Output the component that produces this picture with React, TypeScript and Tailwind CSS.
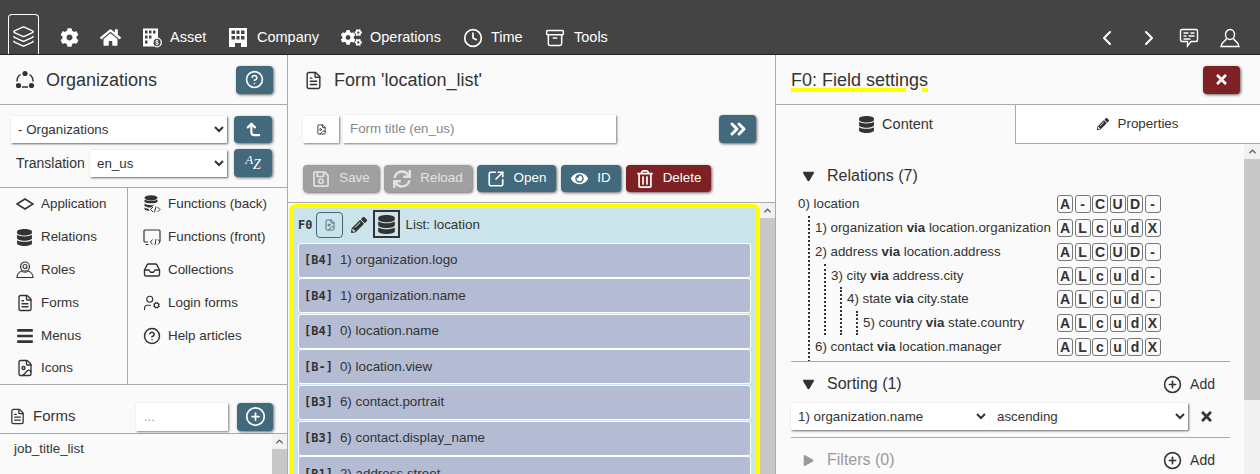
import React from "react";
import { Layers, FileText, Archive, ChevronLeft, ChevronRight, CircleHelp, CornerLeftUp, Inbox, UserCog, FileImage, ChevronsRight, SquareArrowOutUpRight, CirclePlus, ChevronUp, Clock } from "lucide-react";
import { FaCog, FaCogs, FaHome, FaDatabase, FaBars, FaRegSave, FaSync, FaEye, FaPencilAlt, FaTimes, FaPlay, FaRegTrashAlt } from "react-icons/fa";

const SANS = "font-['Liberation_Sans',Arial,sans-serif]";

function OrgIcon() {
  return (
    <svg width="20" height="20" viewBox="0 0 20 20" fill="none" stroke="#333" strokeWidth="1.500">
      <path d="M5.500 4.500A8 8 0 0 0 2 11.500M14.500 4.500A8 8 0 0 1 18 11.500M7 17h6" />
      <circle cx="10" cy="3.500" r="2.600" fill="#333" stroke="none" />
      <circle cx="3.500" cy="15.500" r="2.600" fill="#333" stroke="none" />
      <circle cx="16.500" cy="15.500" r="2.600" fill="#333" stroke="none" />
    </svg>
  );
}

function AssetIcon() {
  return (
    <svg width="20" height="21" viewBox="0 0 20 20">
      <path fillRule="evenodd" fill="#fff" d="M1 1h15v9a6 6 0 0 0-4 9H1zM3 3v3h2.500V3zM7 3v3h2.500V3zM11 3v3h2.500V3zM3 8v3h2.500V8zM7 8v3h2.500V8zM3 13v3h2.500v-3z" />
      <circle cx="15" cy="15" r="4.300" fill="none" stroke="#fff" strokeWidth="1.300" />
      <path d="M16.400 13.500c-1.600-.8-3-.2-2.800.8.2 1 2.800.5 2.900 1.600 0 1-1.500 1.400-3 .6M15 12.200v5.600" fill="none" stroke="#fff" strokeWidth=".9" />
    </svg>
  );
}

function CompanyIcon() {
  return (
    <svg width="18" height="19" viewBox="0 0 18 19">
      <path fillRule="evenodd" fill="#fff" d="M0 0h18v19h-6v-4H6v4H0zM2.500 2.500v3.500H6V2.500zM7.500 2.500v3.500h3V2.500zM12 2.500v3.500h3.500V2.500zM2.500 8v3.500H6V8zM7.500 8v3.500h3V8zM12 8v3.500h3.500V8z" />
    </svg>
  );
}

function ChatIcon() {
  return (
    <svg width="20" height="20" viewBox="0 0 20 20" fill="none" stroke="#fff" strokeWidth="1.400">
      <path d="M3 1.500h14a1.500 1.500 0 0 1 1.500 1.500v9a1.500 1.500 0 0 1-1.500 1.500h-5l-3.500 4.500v-4.500H3A1.500 1.500 0 0 1 1.500 12V3A1.500 1.500 0 0 1 3 1.500z" />
      <path d="M4.500 5h5M11.500 5h4M4.500 8h3M9.500 8h6M4.500 11h7" strokeWidth="1.300" />
    </svg>
  );
}

function BustIcon() {
  return (
    <svg width="20" height="20" viewBox="0 0 20 20" fill="none" stroke="#fff" strokeWidth="1.400">
      <ellipse cx="10" cy="6.500" rx="4.500" ry="5" />
      <path d="M6.500 10.500C6 13 1 14 1 18.500h18c0-4.500-5-5.500-5.500-8" />
    </svg>
  );
}

function DiamondIcon() {
  return (
    <svg width="18" height="12" viewBox="0 0 18 12" fill="none" stroke="#333" strokeWidth="1.500">
      <path d="M1 6 9 1l8 5-8 5z" />
    </svg>
  );
}

function DbCodeIcon() {
  return (
    <svg width="18" height="18" viewBox="0 0 18 18" fill="#333">
      <ellipse cx="8" cy="2.800" rx="6.500" ry="2.600" />
      <path d="M1.500 4.500c1.500 1.800 11.500 1.800 13 0V7c-1.500 1.800-11.500 1.800-13 0zM1.500 8.500c1.500 1.800 8 2 10 1.200L8 12.500c-3 0-5.500-.6-6.500-1.500zM1.500 12.500c.8.700 2.500 1.200 4 1.300l1 2c-2.500 0-4-.4-5-1.300z" />
      <path d="M10 12l-2.500 2.500L10 17M13 11.500l-1.500 6M14.500 12l2.500 2.500-2.500 2.500" fill="none" stroke="#333" strokeWidth="1" />
    </svg>
  );
}

function MonitorCodeIcon() {
  return (
    <svg width="18" height="17" viewBox="0 0 18 17" fill="none" stroke="#333" strokeWidth="1.200">
      <path d="M5 13H2a1 1 0 0 1-1-1V2a1 1 0 0 1 1-1h14a1 1 0 0 1 1 1v10a1 1 0 0 1-.5.8" />
      <path d="M9.500 10.500 7.500 13l2 2.500M13 10l-1 6M15 10.500l2 2.500-2 2.500M2.500 15.500h3" strokeWidth="1" />
    </svg>
  );
}

function RolesIcon() {
  return (
    <svg width="18" height="18" viewBox="0 0 18 18" fill="none" stroke="#333" strokeWidth="1.200">
      <circle cx="9" cy="5.500" r="4.500" />
      <circle cx="9" cy="5.500" r="2" />
      <path d="M5.500 10C3 11 1 14 1 16.500h16c0-2.500-2-5.500-4.500-6.500-1 1.500-6 1.500-7 0z" />
    </svg>
  );
}

function AzIcon() {
  return (
    <span className="flex items-start font-['Liberation_Serif',serif] italic leading-none text-white">
      <span className="-mt-[2px] text-[13px]">A</span>
      <span className="mt-[3px] text-[14px]">Z</span>
    </span>
  );
}

function Squarish({ className = "", children }: { className?: string; children: React.ReactNode }) {
  return (
    <button className={`flex items-center justify-center rounded-[4px] text-white shadow-[1px_1px_3px_rgba(0,0,0,0.6)] ${className}`}>
      {children}
    </button>
  );
}

function ActionBtn({ icon, label, color, w }: { icon: React.ReactNode; label: string; color: string; w: string }) {
  return (
    <button className={`flex h-[27px] items-center justify-center gap-[9px] rounded-[4px] text-[13.4px] shadow-[1px_1px_3px_rgba(0,0,0,0.6)] ${color} ${w}`}>
      {icon}
      <span>{label}</span>
    </button>
  );
}

function TopItem({ icon, label, gap = "gap-[9px]", w }: { icon: React.ReactNode; label?: string; gap?: string; w: string }) {
  return (
    <div className={`flex h-[40px] items-center pt-[7px] ${gap} ${w}`}>
      {icon}
      {label && <span className="text-[14.5px] text-white">{label}</span>}
    </div>
  );
}

function NavLink({ icon, label, pl }: { icon: React.ReactNode; label: string; pl: string }) {
  return (
    <div className={`flex h-[32.800px] items-center ${pl}`}>
      <span className="flex w-[25px] shrink-0 justify-start">{icon}</span>
      <span className="text-[13.4px] text-[#333]">{label}</span>
    </div>
  );
}

function Field({ tag, text }: { tag: string; text: string }) {
  return (
    <div className="flex h-[35px] shrink-0 items-center gap-[7px] rounded-[3px] border border-white bg-[#b4bcd4] pl-[5px] text-[13.4px] text-[#333]">
      <span className="font-['DejaVu_Sans_Mono',monospace] text-[12px] font-bold">{tag}</span>
      <span>{text}</span>
    </div>
  );
}

function Perm({ letters }: { letters: string }) {
  return (
    <div className="flex h-[23.700px] items-center gap-[1.500px]">
      {letters.split("").map((l, i) => (
        <span key={i} className="flex h-[18px] w-[16px] items-center justify-center rounded-[3px] border border-[#777] text-[14px] font-bold leading-none text-[#333]">
          {l}
        </span>
      ))}
    </div>
  );
}

function Rel({ n, a, b }: { n: string; a: string; b?: string }) {
  return (
    <div className="flex h-[23.700px] items-center whitespace-nowrap text-[13.3px] text-[#333]">
      <span>
        {n} {a}
        {b && (
          <>
            {" "}
            <b>via</b> {b}
          </>
        )}
      </span>
    </div>
  );
}

function ScrollTrack({ className = "" }: { className?: string }) {
  return (
    <div className={`flex w-[15px] shrink-0 flex-col bg-[#f1f1f1] ${className}`}>
      <div className="flex h-[15px] items-center justify-center">
        <ChevronUp size={11} strokeWidth={3} color="#555" />
      </div>
      <div className="flex-1 bg-[#c8c8c8]" />
    </div>
  );
}

const selectCls = "h-[27px] bg-white pl-[3px] text-[13.33px] text-[#333] outline-none";

export default function App() {
  const fields: [string, string][] = [
    ["[B4]", "1) organization.logo"],
    ["[B4]", "1) organization.name"],
    ["[B4]", "0) location.name"],
    ["[B-]", "0) location.view"],
    ["[B3]", "6) contact.portrait"],
    ["[B3]", "6) contact.display_name"],
    ["[B1]", "2) address.street"],
  ];
  return (
    <div className={`flex h-[474px] w-[1260px] flex-col overflow-hidden bg-[#fafafa] ${SANS}`}>
      {/* Top bar */}
      <header className="flex h-[55px] shrink-0 items-end border-b border-[#222] bg-[#444] pl-[8px] pr-[20px]">
        <div className="flex h-[40px] w-[31px] items-center justify-center rounded-t-[4px] border border-b-0 border-white pt-[3px]">
          <Layers size={23} color="#fff" strokeWidth={1.500} />
        </div>
        <div className="flex h-[40px] flex-1 items-center pl-[21px]">
          <TopItem w="w-[40px]" icon={<FaCog size={19} color="#fff" />} />
          <TopItem w="w-[42px]" icon={<FaHome size={21} color="#fff" />} />
          <TopItem w="w-[87px]" icon={<AssetIcon />} label="Asset" gap="gap-[8px]" />
          <TopItem w="w-[112px]" icon={<CompanyIcon />} label="Company" gap="gap-[10px]" />
          <TopItem w="w-[122px]" icon={<FaCogs size={21} color="#fff" />} label="Operations" gap="gap-[8px]" />
          <TopItem w="w-[82px]" icon={<Clock size={20} color="#fff" strokeWidth={2} />} label="Time" gap="gap-[8px]" />
          <TopItem w="w-[70px]" icon={<Archive size={20} color="#fff" strokeWidth={1.800} />} label="Tools" gap="gap-[9px]" />
        </div>
        <div className="flex h-[40px] items-center pt-[7px]">
          <ChevronLeft size={24} color="#fff" strokeWidth={2} />
          <ChevronRight size={24} color="#fff" strokeWidth={2} className="ml-[18px]" />
          <span className="ml-[18px]"><ChatIcon /></span>
          <span className="ml-[21px]"><BustIcon /></span>
        </div>
      </header>

      <div className="flex min-h-0 flex-1">
        {/* Left panel */}
        <aside className="flex w-[288px] shrink-0 flex-col border-r border-[#aaa]">
          <div className="flex h-[50px] shrink-0 items-center border-b border-[#aaa] pl-[15px] pr-[14px]">
            <OrgIcon />
            <span className="ml-[11px] mt-[1px] flex-1 text-[18px] text-[#333]">Organizations</span>
            <Squarish className="h-[28px] w-[37px] bg-[#43697c]"><CircleHelp size={19} strokeWidth={2} /></Squarish>
          </div>
          <div className="flex h-[83px] shrink-0 flex-col gap-[6px] border-b border-[#aaa] pl-[11px] pt-[11px]">
            <div className="flex gap-[7px]">
              <select className={`${selectCls} w-[216px] shadow-[1px_1px_2px_rgba(0,0,0,0.6)]`} defaultValue="- Organizations">
                <option>- Organizations</option>
              </select>
              <Squarish className="h-[27px] w-[38px] bg-[#43697c]"><CornerLeftUp size={17} strokeWidth={3} /></Squarish>
            </div>
            <div className="flex items-center gap-[7px]">
              <div className="flex w-[216px] items-center justify-between pl-[5px]">
                <span className="text-[14px] text-[#333]">Translation</span>
                <select className={`${selectCls} w-[137px] shadow-[1px_1px_2px_rgba(0,0,0,0.6)]`} defaultValue="en_us">
                  <option>en_us</option>
                </select>
              </div>
              <Squarish className="h-[28px] w-[38px] bg-[#43697c]"><AzIcon /></Squarish>
            </div>
          </div>
          <div className="flex h-[197px] shrink-0 border-b border-[#aaa]">
            <div className="w-[128px] shrink-0 border-r border-[#aaa]">
              <NavLink pl="pl-[16px]" icon={<DiamondIcon />} label="Application" />
              <NavLink pl="pl-[16px]" icon={<FaDatabase size={17} color="#333" />} label="Relations" />
              <NavLink pl="pl-[16px]" icon={<RolesIcon />} label="Roles" />
              <NavLink pl="pl-[16px]" icon={<FileText size={18} color="#333" strokeWidth={1.800} />} label="Forms" />
              <NavLink pl="pl-[16px]" icon={<FaBars size={18} color="#333" />} label="Menus" />
              <NavLink pl="pl-[16px]" icon={<FileImage size={18} color="#333" strokeWidth={1.800} />} label="Icons" />
            </div>
            <div className="flex-1">
              <NavLink pl="pl-[15px]" icon={<DbCodeIcon />} label="Functions (back)" />
              <NavLink pl="pl-[15px]" icon={<MonitorCodeIcon />} label="Functions (front)" />
              <NavLink pl="pl-[15px]" icon={<Inbox size={18} color="#333" strokeWidth={1.800} />} label="Collections" />
              <NavLink pl="pl-[15px]" icon={<UserCog size={18} color="#333" strokeWidth={1.500} />} label="Login forms" />
              <NavLink pl="pl-[15px]" icon={<CircleHelp size={18} color="#333" strokeWidth={2} />} label="Help articles" />
            </div>
          </div>
          <div className="flex h-[49px] shrink-0 items-center border-b border-[#aaa] pl-[9px] pt-[15px]">
            <FileText size={17} color="#333" strokeWidth={1.800} />
            <span className="ml-[7px] flex-1 text-[15px] text-[#333]">Forms</span>
            <div className="flex h-[28px] w-[92px] items-center bg-white pl-[8px] text-[13px] text-[#999] shadow-[1px_1px_2px_rgba(0,0,0,0.5)]">...</div>
            <Squarish className="ml-[9px] mr-[14px] h-[28px] w-[36px] bg-[#43697c]"><CirclePlus size={21} strokeWidth={2} /></Squarish>
          </div>
          <div className="flex min-h-0 flex-1">
            <div className="flex-1 pl-[14px] pt-[5px] text-[13.4px] text-[#333]">job_title_list</div>
            <ScrollTrack />
          </div>
        </aside>

        {/* Middle panel */}
        <main className="flex w-[488px] shrink-0 flex-col border-r border-[#aaa]">
          <div className="flex h-[50px] shrink-0 items-center pl-[16px]">
            <FileText size={19} color="#333" strokeWidth={1.800} />
            <span className="ml-[11px] text-[18px] text-[#333]">Form 'location_list'</span>
          </div>
          <div className="flex h-[49px] shrink-0 items-center pb-[1px] pl-[15px] pr-[19px]">
            <div className="flex h-[27px] w-[36px] items-center justify-center bg-white shadow-[1px_1px_2px_rgba(0,0,0,0.5)]">
              <FileImage size={11} color="#333" strokeWidth={2} />
            </div>
            <div className="ml-[4px] flex h-[28px] w-[273px] items-center bg-white pl-[7px] text-[13.33px] text-[#888] shadow-[1px_1px_2px_rgba(0,0,0,0.5)]">Form title (en_us)</div>
            <div className="flex-1" />
            <Squarish className="h-[28px] w-[37px] bg-[#43697c]"><ChevronsRight size={24} strokeWidth={3} /></Squarish>
          </div>
          <div className="flex h-[49px] shrink-0 gap-[5px] border-b border-[#aaa] pl-[15px] pt-[11px]">
            <ActionBtn w="w-[76px]" color="bg-[#a0a0a0] text-[#e2e2e2]" icon={<FaRegSave size={18} />} label="Save" />
            <ActionBtn w="w-[88px]" color="bg-[#a0a0a0] text-[#e2e2e2]" icon={<FaSync size={18} />} label="Reload" />
            <ActionBtn w="w-[79px]" color="bg-[#43697c] text-white" icon={<SquareArrowOutUpRight size={18} strokeWidth={2.200} />} label="Open" />
            <ActionBtn w="w-[60px]" color="bg-[#43697c] text-white" icon={<FaEye size={17} />} label="ID" />
            <ActionBtn w="w-[85px]" color="bg-[#7e2124] text-white" icon={<FaRegTrashAlt size={18} />} label="Delete" />
          </div>
          <div className="flex min-h-0 flex-1 pl-[1px]">
            <div className="mt-[1px] flex min-h-0 flex-1 flex-col gap-[0.600px] overflow-hidden rounded-t-[6px] border-[4px] border-b-0 border-[#ffff00] bg-[#cbe3ea] px-[5px] pt-[1px]">
              <div className="flex h-[33px] shrink-0 items-start pt-[1px]">
                <span className="mt-[6px] font-['DejaVu_Sans_Mono',monospace] text-[12px] font-bold text-[#333]">F0</span>
                <div className="ml-[4px] mt-[2px] flex h-[26px] w-[27px] items-center justify-center rounded-[4px] border border-[#43697c]">
                  <FileImage size={12} color="#43697c" strokeWidth={1.800} />
                </div>
                <FaPencilAlt size={16} color="#333" className="ml-[8px] mt-[7px]" />
                <div className="ml-[6px] flex h-[28px] w-[27px] items-center justify-center border-2 border-[#333]">
                  <FaDatabase size={19} color="#333" />
                </div>
                <span className="ml-[5px] mt-[5px] text-[13.4px] text-[#333]">List: location</span>
              </div>
              {fields.map((f, i) => (
                <Field key={i} tag={f[0]} text={f[1]} />
              ))}
            </div>
            <ScrollTrack />
          </div>
        </main>

        {/* Right panel */}
        <section className="flex min-w-0 flex-1 flex-col">
          <div className="flex h-[50px] shrink-0 items-center border-b border-[#aaa] pl-[15px] pr-[20px]">
            <span className="mt-[1px] flex-1 text-[18px] text-[#333]">
              <span className="underline decoration-[#ffff00] decoration-[4px] underline-offset-[2px]">F0: Field settings</span>
            </span>
            <Squarish className="h-[28px] w-[37px] bg-[#7e2124]"><FaTimes size={15} /></Squarish>
          </div>
          <div className="flex h-[39px] shrink-0">
            <div className="flex w-[239px] items-center justify-center gap-[7px] text-[14.5px] text-[#333]">
              <FaDatabase size={17} color="#333" />
              Content
            </div>
            <div className="flex flex-1 items-center justify-center gap-[8px] border-b border-l border-[#aaa] bg-white text-[13.4px] text-[#333]">
              <FaPencilAlt size={12} color="#333" />
              Properties
            </div>
          </div>
          <div className="flex min-h-0 flex-1">
            <div className="min-w-0 flex-1 pl-[15px] pr-[14px]">
              <div className="mt-[22px] flex h-[20px] items-center pl-[12px]">
                <FaPlay size={11} color="#333" className="rotate-90" />
                <span className="ml-[13px] text-[16px] text-[#333]">Relations (7)</span>
              </div>
              <div className="mt-[6.600px] flex h-[169.400px] overflow-hidden border-b border-[#aaa]">
                <div className="w-[266px] shrink-0 overflow-hidden pl-[7px]">
                  <Rel n="0)" a="location" />
                  <div className="ml-[10px] border-l-2 border-dotted border-[#333] pb-[20px] pl-[5px]">
                    <Rel n="1)" a="organization" b="location.organization" />
                    <Rel n="2)" a="address" b="location.address" />
                    <div className="ml-[9px] border-l-2 border-dotted border-[#333] pl-[5px]">
                      <Rel n="3)" a="city" b="address.city" />
                      <div className="ml-[9px] border-l-2 border-dotted border-[#333] pl-[5px]">
                        <Rel n="4)" a="state" b="city.state" />
                        <div className="ml-[9px] border-l-2 border-dotted border-[#333] pl-[5px]">
                          <Rel n="5)" a="country" b="state.country" />
                        </div>
                      </div>
                    </div>
                    <Rel n="6)" a="contact" b="location.manager" />
                  </div>
                </div>
                <div>
                  {["A-CUD-", "ALcudX", "ALCUD-", "ALcud-", "ALcud-", "ALcudX", "ALcudX"].map((p, i) => (
                    <Perm key={i} letters={p} />
                  ))}
                </div>
              </div>
              <div className="flex h-[41px] items-center pl-[12px] pr-[15px] pt-[4px]">
                <FaPlay size={11} color="#333" className="rotate-90" />
                <span className="ml-[13px] flex-1 text-[16px] text-[#333]">Sorting (1)</span>
                <CirclePlus size={19} color="#333" strokeWidth={2} />
                <span className="ml-[8px] text-[14px] text-[#333]">Add</span>
              </div>
              <div className="flex h-[35px] items-start border-b border-[#aaa]">
                <div className="flex shadow-[1px_1px_2px_rgba(0,0,0,0.6)]">
                  <select className={`${selectCls} w-[198px]`} defaultValue="1) organization.name">
                    <option>1) organization.name</option>
                  </select>
                  <select className={`${selectCls} ml-[1px] w-[198px]`} defaultValue="ascending">
                    <option>ascending</option>
                  </select>
                </div>
                <FaTimes size={15} color="#333" className="ml-[11px] mt-[6px]" />
              </div>
              <div className="flex h-[43px] items-center pl-[12px] pr-[15px] pt-[2px]">
                <FaPlay size={11} color="#999" />
                <span className="ml-[13px] flex-1 text-[16px] text-[#999]">Filters (0)</span>
                <CirclePlus size={19} color="#333" strokeWidth={2} />
                <span className="ml-[8px] text-[14px] text-[#333]">Add</span>
              </div>
            </div>
            <div className="flex w-[16px] shrink-0 flex-col bg-[#f1f1f1]">
              <div className="flex h-[15px] items-center justify-center">
                <ChevronUp size={11} strokeWidth={3} color="#555" />
              </div>
              <div className="h-[241px] bg-[#c8c8c8]" />
            </div>
          </div>
        </section>
      </div>
    </div>
  );
}
